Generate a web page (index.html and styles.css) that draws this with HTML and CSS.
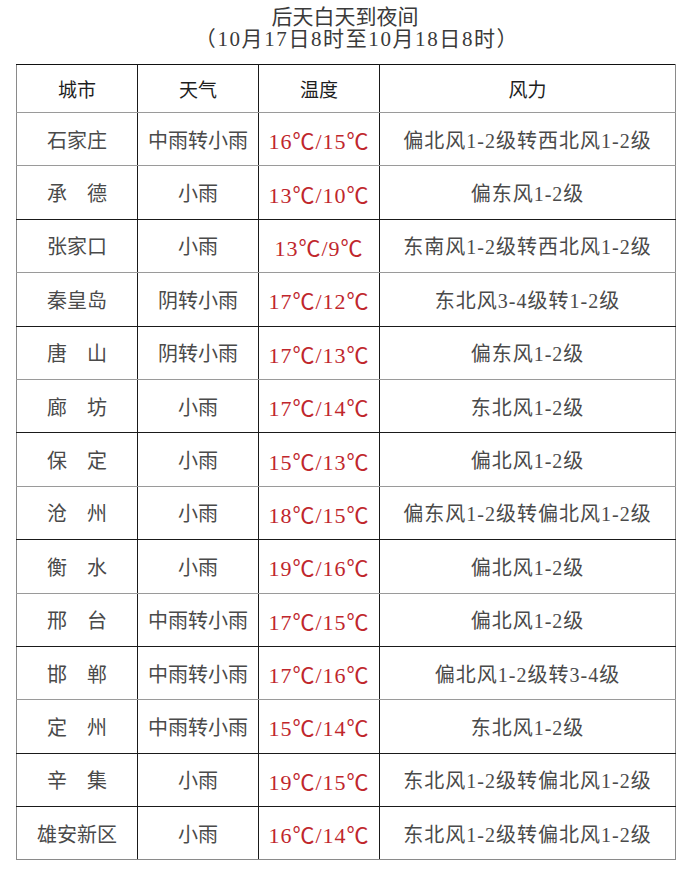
FILE: index.html
```html
<!DOCTYPE html>
<html lang="zh-CN">
<head>
<meta charset="utf-8">
<title>后天白天到夜间</title>
<link rel="stylesheet" href="styles.css">
</head>
<body>
<div class="page">
  <div class="title">
    <div class="title-line">后天白天到夜间</div>
    <div class="title-line title-sub">（10月17日8时至10月18日8时）</div>
  </div>
  <table class="forecast">
    <colgroup>
      <col class="c-city"><col class="c-weather"><col class="c-temp"><col class="c-wind">
    </colgroup>
    <thead>
      <tr><th>城市</th><th>天气</th><th>温度</th><th>风力</th></tr>
    </thead>
    <tbody>
      <tr><td>石家庄</td><td>中雨转小雨</td><td class="temp">16℃/15℃</td><td class="wind">偏北风1-2级转西北风1-2级</td></tr>
      <tr><td>承　德</td><td>小雨</td><td class="temp">13℃/10℃</td><td class="wind">偏东风1-2级</td></tr>
      <tr><td>张家口</td><td>小雨</td><td class="temp">13℃/9℃</td><td class="wind">东南风1-2级转西北风1-2级</td></tr>
      <tr><td>秦皇岛</td><td>阴转小雨</td><td class="temp">17℃/12℃</td><td class="wind">东北风3-4级转1-2级</td></tr>
      <tr><td>唐　山</td><td>阴转小雨</td><td class="temp">17℃/13℃</td><td class="wind">偏东风1-2级</td></tr>
      <tr><td>廊　坊</td><td>小雨</td><td class="temp">17℃/14℃</td><td class="wind">东北风1-2级</td></tr>
      <tr><td>保　定</td><td>小雨</td><td class="temp">15℃/13℃</td><td class="wind">偏北风1-2级</td></tr>
      <tr><td>沧　州</td><td>小雨</td><td class="temp">18℃/15℃</td><td class="wind">偏东风1-2级转偏北风1-2级</td></tr>
      <tr><td>衡　水</td><td>小雨</td><td class="temp">19℃/16℃</td><td class="wind">偏北风1-2级</td></tr>
      <tr><td>邢　台</td><td>中雨转小雨</td><td class="temp">17℃/15℃</td><td class="wind">偏北风1-2级</td></tr>
      <tr><td>邯　郸</td><td>中雨转小雨</td><td class="temp">17℃/16℃</td><td class="wind">偏北风1-2级转3-4级</td></tr>
      <tr><td>定　州</td><td>中雨转小雨</td><td class="temp">15℃/14℃</td><td class="wind">东北风1-2级</td></tr>
      <tr><td>辛　集</td><td>小雨</td><td class="temp">19℃/15℃</td><td class="wind">东北风1-2级转偏北风1-2级</td></tr>
      <tr><td>雄安新区</td><td>小雨</td><td class="temp">16℃/14℃</td><td class="wind">东北风1-2级转偏北风1-2级</td></tr>
    </tbody>
  </table>
</div>
</body>
</html>
```

FILE: styles.css
```css
html, body {
  margin: 0;
  padding: 0;
  background: #ffffff;
}

body {
  font-family: "Liberation Serif", "Noto Sans CJK SC", serif;
  color: #444444;
}

.page {
  width: 690px;
  height: 892px;
}

.title {
  height: 64px;
  box-sizing: border-box;
  padding-top: 6px;
  text-align: center;
  color: #3a3a3a;
  font-size: 21px;
  line-height: 22px;
}

.title-sub {
  letter-spacing: 1.6px;
  padding-left: 24px;
}

.forecast {
  margin-left: 16px;
  width: 660px;
  border-collapse: collapse;
  table-layout: fixed;
  border-top: 1px solid #111111;
  border-left: 1px solid #8a8a8a;
  border-right: 1px solid #8a8a8a;
  border-bottom: 1px solid #8a8a8a;
}

.c-city { width: 121px; }
.c-weather { width: 121px; }
.c-temp { width: 121px; }
.c-wind { width: auto; }

.forecast th,
.forecast td {
  padding: 0;
  text-align: center;
  vertical-align: middle;
  border-left: 1px solid #1a1a1a;
  border-bottom: 1px solid #9a9a9a;
  white-space: nowrap;
}

.forecast th:first-child,
.forecast td:first-child {
  border-left: none;
}

.forecast th {
  height: 47px;
  font-size: 19px;
  font-weight: normal;
  color: #1e1e1e;
}

.forecast td {
  height: 52.4px;
  font-size: 20px;
  color: #4a4a4a;
}

.forecast tbody tr:nth-child(even) td {
  border-bottom-color: #1a1a1a;
}

.forecast tbody tr:nth-last-child(2) td {
  border-bottom-color: #1a1a1a;
}

.forecast tbody tr:last-child td {
  border-bottom-color: #8a8a8a;
}

.forecast td.temp {
  color: #c0262c;
  font-size: 22px;
  letter-spacing: 1px;
}

.forecast td.wind {
  letter-spacing: 1px;
}
```
